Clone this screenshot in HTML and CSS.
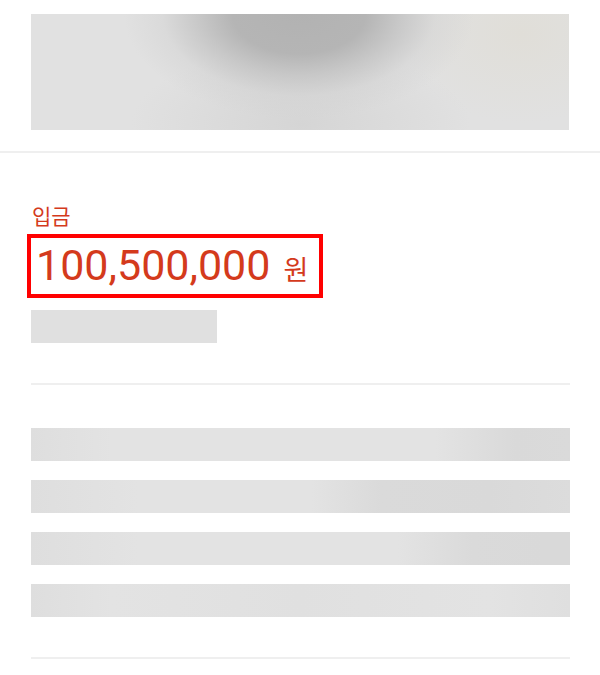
FILE: index.html
```html
<!DOCTYPE html>
<html lang="ko">
<head>
<meta charset="utf-8">
<link rel="stylesheet" href="styles.css">
</head>
<body>
  <section class="hero">
    <div class="hero-img"></div>
  </section>
  <section class="summary">
    <div class="label">입금</div>
    <div class="amount"><span class="num">100,500,000</span><span class="unit">원</span></div>
    <div class="sub-skel"></div>
    <hr class="divider">
    <div class="rows">
      <div class="row-skel r1"></div>
      <div class="row-skel r2"></div>
      <div class="row-skel r3"></div>
      <div class="row-skel r4"></div>
    </div>
    <hr class="divider bottom">
  </section>
</body>
</html>
```

FILE: styles.css
```css
* { box-sizing: border-box; }
html, body {
  margin: 0;
  background: #ffffff;
  font-family: "Noto Sans CJK KR", "Noto Sans", sans-serif;
}
.hero {
  padding: 14px 31px 21px;
  border-bottom: 2px solid #efefef;
}
.hero-img {
  height: 116px;
  background:
    radial-gradient(ellipse 175px 105px at 268px 0px, rgba(178,178,178,1) 0%, rgba(181,181,181,1) 38%, rgba(192,192,192,0.75) 58%, rgba(205,205,205,0.35) 78%, rgba(212,212,212,0) 100%),
    radial-gradient(ellipse 170px 75px at 270px 110px, rgba(210,210,210,0.8), rgba(215,215,215,0) 100%),
    radial-gradient(ellipse 120px 90px at 490px 20px, rgba(224,222,216,1), rgba(224,222,216,0) 100%),
    #e1e1e1;
}
.summary {
  padding: 0 30px 0 31px;
}
.label {
  margin-top: 48px;
  font-size: 21px;
  line-height: 29px;
  color: #d43a1c;
  padding-left: 1px;
}
.amount {
  display: inline-flex;
  align-items: baseline;
  margin-top: 4px;
  margin-left: -4px;
  border: 4px solid #ff0000;
  padding: 0 11px 0 5px;
  height: 64px;
  color: #d43a1c;
}
.num {
  font-family: Roboto, "Noto Sans", sans-serif;
  font-size: 43px;
  line-height: 54px;
}
.unit {
  font-size: 27px;
  margin-left: 13px;
}
.sub-skel {
  width: 186px;
  height: 33px;
  margin-top: 12px;
  background: #e0e0e0;
}
.divider {
  border: 0;
  height: 2px;
  background: #efefef;
  margin: 40px 0 0;
}
.rows {
  display: flex;
  flex-direction: column;
  gap: 19px;
  padding-top: 43px;
}
.row-skel {
  height: 33px;
  background: #e2e2e2;
}
.r1 { background: linear-gradient(90deg, #dedede 0%, #e3e3e3 15%, #e3e3e3 75%, #d9d9d9 90%, #dadada 100%); }
.r2 { background: linear-gradient(90deg, #dedede 0%, #e3e3e3 20%, #e3e3e3 52%, #dadada 65%, #d9d9d9 85%, #dcdcdc 100%); }
.r3 { background: linear-gradient(90deg, #dedede 0%, #e3e3e3 20%, #e3e3e3 68%, #dadada 82%, #d9d9d9 95%); }
.r4 { background: linear-gradient(90deg, #dedede 0%, #e3e3e3 15%, #e0e0e0 50%, #e3e3e3 85%, #dfdfdf 100%); }
.divider.bottom {
  margin-top: 40px;
}
```
